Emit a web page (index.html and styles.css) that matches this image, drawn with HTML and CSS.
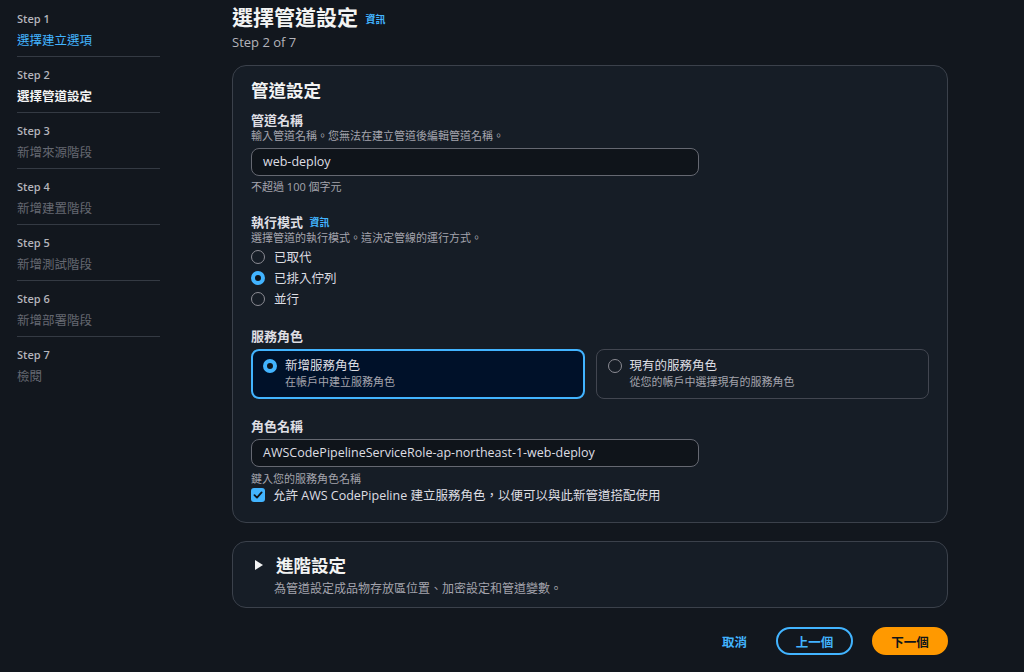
FILE: index.html
```html
<!DOCTYPE html>
<html lang="zh-Hant">
<head>
    <meta charset="UTF-8">
    <meta name="viewport" content="width=device-width, initial-scale=1.0">
    <title>建立管道 - 選擇管道設定</title>
    <link rel="stylesheet" href="styles.css">
</head>
<body>
    <div class="layout">
        <!-- Wizard steps -->
        <nav class="steps">
            <div class="step">
                <div class="step-num">Step 1</div>
                <a class="step-title link" href="#">選擇建立選項</a>
            </div>
            <div class="step">
                <div class="step-num">Step 2</div>
                <div class="step-title current">選擇管道設定</div>
            </div>
            <div class="step">
                <div class="step-num">Step 3</div>
                <div class="step-title disabled">新增來源階段</div>
            </div>
            <div class="step">
                <div class="step-num">Step 4</div>
                <div class="step-title disabled">新增建置階段</div>
            </div>
            <div class="step">
                <div class="step-num">Step 5</div>
                <div class="step-title disabled">新增測試階段</div>
            </div>
            <div class="step">
                <div class="step-num">Step 6</div>
                <div class="step-title disabled">新增部署階段</div>
            </div>
            <div class="step last">
                <div class="step-num">Step 7</div>
                <div class="step-title disabled">檢閱</div>
            </div>
        </nav>

        <main class="main">
            <header class="page-header">
                <h1>選擇管道設定 <a class="info" href="#">資訊</a></h1>
                <div class="step-of">Step 2 of 7</div>
            </header>

            <!-- Pipeline settings -->
            <section class="container">
                <h2>管道設定</h2>

                <div class="field">
                    <div class="label">管道名稱</div>
                    <div class="desc">輸入管道名稱。您無法在建立管道後編輯管道名稱。</div>
                    <div class="input">web-deploy</div>
                    <div class="hint">不超過 100 個字元</div>
                </div>

                <div class="field mode">
                    <div class="label">執行模式 <a class="info" href="#">資訊</a></div>
                    <div class="desc">選擇管道的執行模式。這決定管線的運行方式。</div>
                    <div class="radios">
                        <div class="radio-row"><span class="radio"></span>已取代</div>
                        <div class="radio-row"><span class="radio checked"></span>已排入佇列</div>
                        <div class="radio-row"><span class="radio"></span>並行</div>
                    </div>
                </div>

                <div class="field">
                    <div class="label">服務角色</div>
                    <div class="tiles">
                        <div class="tile selected">
                            <span class="radio checked"></span>
                            <div>
                                <div class="tile-title">新增服務角色</div>
                                <div class="tile-desc">在帳戶中建立服務角色</div>
                            </div>
                        </div>
                        <div class="tile">
                            <span class="radio"></span>
                            <div>
                                <div class="tile-title">現有的服務角色</div>
                                <div class="tile-desc">從您的帳戶中選擇現有的服務角色</div>
                            </div>
                        </div>
                    </div>
                </div>

                <div class="field">
                    <div class="label">角色名稱</div>
                    <div class="input spaced">AWSCodePipelineServiceRole-ap-northeast-1-web-deploy</div>
                    <div class="hint role">鍵入您的服務角色名稱</div>
                    <div class="check-row">
                        <span class="checkbox">
                            <svg width="10" height="10" viewBox="0 0 10 10"><path d="M1.5 5.2 L4 7.6 L8.6 2.4" fill="none" stroke="#0f141a" stroke-width="1.8" stroke-linecap="round" stroke-linejoin="round"/></svg>
                        </span>
                        允許 AWS CodePipeline 建立服務角色，以便可以與此新管道搭配使用
                    </div>
                </div>
            </section>

            <!-- Advanced settings -->
            <section class="container expandable">
                <div class="exp-head">
                    <svg class="caret" width="10" height="12" viewBox="0 0 10 12"><path d="M1 1 L9 6 L1 11 Z" fill="#f2f3f3"/></svg>
                    <h2>進階設定</h2>
                </div>
                <div class="exp-desc">為管道設定成品物存放區位置、加密設定和管道變數。</div>
            </section>

            <div class="actions">
                <button class="btn-link">取消</button>
                <button class="btn-normal">上一個</button>
                <button class="btn-primary">下一個</button>
            </div>
        </main>
    </div>
</body>
</html>
```

FILE: styles.css
```css
/* Base */
body {
    margin: 0;
    background-color: #12171e;
    color: #dedee3;
    font-family: 'Open Sans', 'Noto Sans CJK TC', sans-serif;
}

a {
    text-decoration: none;
}

.layout {
    display: flex;
}

/* Steps navigation */
.steps {
    width: 143px;
    padding: 1px 0 0 17px;
    flex-shrink: 0;
}

.step {
    padding: 10px 0 5px;
    border-bottom: 1px solid #343a43;
}

.step.last {
    border-bottom: none;
}

.step-num {
    font-size: 11px;
    line-height: 16px;
    font-weight: 600;
    color: #b4b4bb;
}

.step-title {
    display: block;
    margin-top: 4px;
    font-size: 12.5px;
    line-height: 20px;
}

.step-title.link {
    color: #42b4ff;
}

.step-title.current {
    color: #f2f3f3;
    font-weight: bold;
}

.step-title.disabled {
    color: #656871;
}

/* Main column */
.main {
    width: 716px;
    margin-left: 72px;
}

.page-header h1 {
    margin: 3px 0 0;
    font-size: 21px;
    line-height: 28px;
    font-weight: bold;
    color: #f2f3f3;
}

.info {
    font-size: 10px;
    line-height: 1;
    font-weight: bold;
    color: #42b4ff;
    vertical-align: 2px;
    margin-left: 2px;
}

.step-of {
    margin-top: 2px;
    font-size: 13px;
    line-height: 18px;
    color: #b4b4bb;
}

/* Containers */
.container {
    margin-top: 14px;
    background-color: #161d26;
    border: 1px solid #3b414b;
    border-radius: 14px;
    padding: 12px 18px 19px;
}

.container h2 {
    margin: 0;
    font-size: 17.5px;
    line-height: 24px;
    font-weight: bold;
    color: #f2f3f3;
}

/* Form fields */
.field {
    margin-top: 10px;
}

.field + .field {
    margin-top: 19px;
}

.field.mode {
    margin-top: 20px;
}

.label {
    font-size: 13px;
    line-height: 16px;
    font-weight: bold;
    color: #dedee3;
}

.label .info {
    vertical-align: 1px;
    margin-left: 3px;
}

.desc,
.hint {
    font-size: 11px;
    line-height: 14px;
    color: #a4a4ad;
}

.desc {
    margin-top: 1px;
}

.hint {
    margin-top: 4px;
}

.hint.role {
    margin-top: 5px;
}

.input {
    box-sizing: border-box;
    width: 448px;
    height: 28px;
    margin-top: 5px;
    padding: 0 11px;
    background-color: #0f141a;
    border: 1px solid #656871;
    border-radius: 8px;
    font-size: 12.5px;
    line-height: 26px;
    color: #dedee3;
}

/* Radios */
.radios {
    margin-top: 1px;
}

.radio-row {
    display: flex;
    align-items: center;
    height: 21px;
    font-size: 12.5px;
    color: #dedee3;
}

.radio {
    box-sizing: border-box;
    width: 14px;
    height: 14px;
    margin-right: 9px;
    border: 1.5px solid #8c8c94;
    border-radius: 50%;
    flex-shrink: 0;
}

.radio.checked {
    border: 4px solid #42b4ff;
    background-color: #0f141a;
}

/* Service role tiles */
.tiles {
    display: grid;
    grid-template-columns: 1fr 1fr;
    gap: 11px;
    margin-top: 5px;
}

.tile {
    box-sizing: border-box;
    height: 50px;
    display: flex;
    align-items: flex-start;
    padding: 7px 11px;
    border: 1px solid #424650;
    border-radius: 8px;
}

.tile .radio {
    margin-top: 2px;
    margin-right: 8px;
}

.tile.selected {
    background-color: #001129;
    border: 2px solid #42b4ff;
    padding: 6px 10px;
}

.tile-title {
    font-size: 12.5px;
    line-height: 18px;
    color: #dedee3;
}

.tile-desc {
    font-size: 11px;
    line-height: 14px;
    color: #a4a4ad;
}

/* Checkbox */
.check-row {
    display: flex;
    align-items: center;
    height: 17px;
    font-size: 12.5px;
    color: #dedee3;
}

.checkbox {
    width: 14px;
    height: 14px;
    margin-right: 8px;
    background-color: #42b4ff;
    border-radius: 3px;
    display: flex;
    align-items: center;
    justify-content: center;
}

/* Expandable section */
.expandable {
    margin-top: 18px;
    padding: 11px 18px 10px;
}

.exp-head {
    display: flex;
    align-items: center;
}

.caret {
    margin: 0 12px 0 3px;
}

.exp-desc {
    margin-left: 23px;
    margin-top: 4px;
    font-size: 12px;
    line-height: 16px;
    color: #a4a4ad;
}

/* Actions */
.actions {
    display: flex;
    justify-content: flex-end;
    align-items: center;
    margin-top: 19px;
}

button {
    font-family: inherit;
    font-size: 12.5px;
    font-weight: bold;
    height: 28px;
    border-radius: 14px;
    cursor: pointer;
}

.btn-link {
    background: none;
    border: none;
    color: #42b4ff;
    padding: 0;
    margin-right: 29px;
}

.btn-normal {
    width: 77px;
    background: none;
    border: 2px solid #42b4ff;
    color: #42b4ff;
    margin-right: 19px;
}

.btn-primary {
    width: 76px;
    background-color: #ff9900;
    border: 2px solid #ff9900;
    color: #0f141a;
}
```
